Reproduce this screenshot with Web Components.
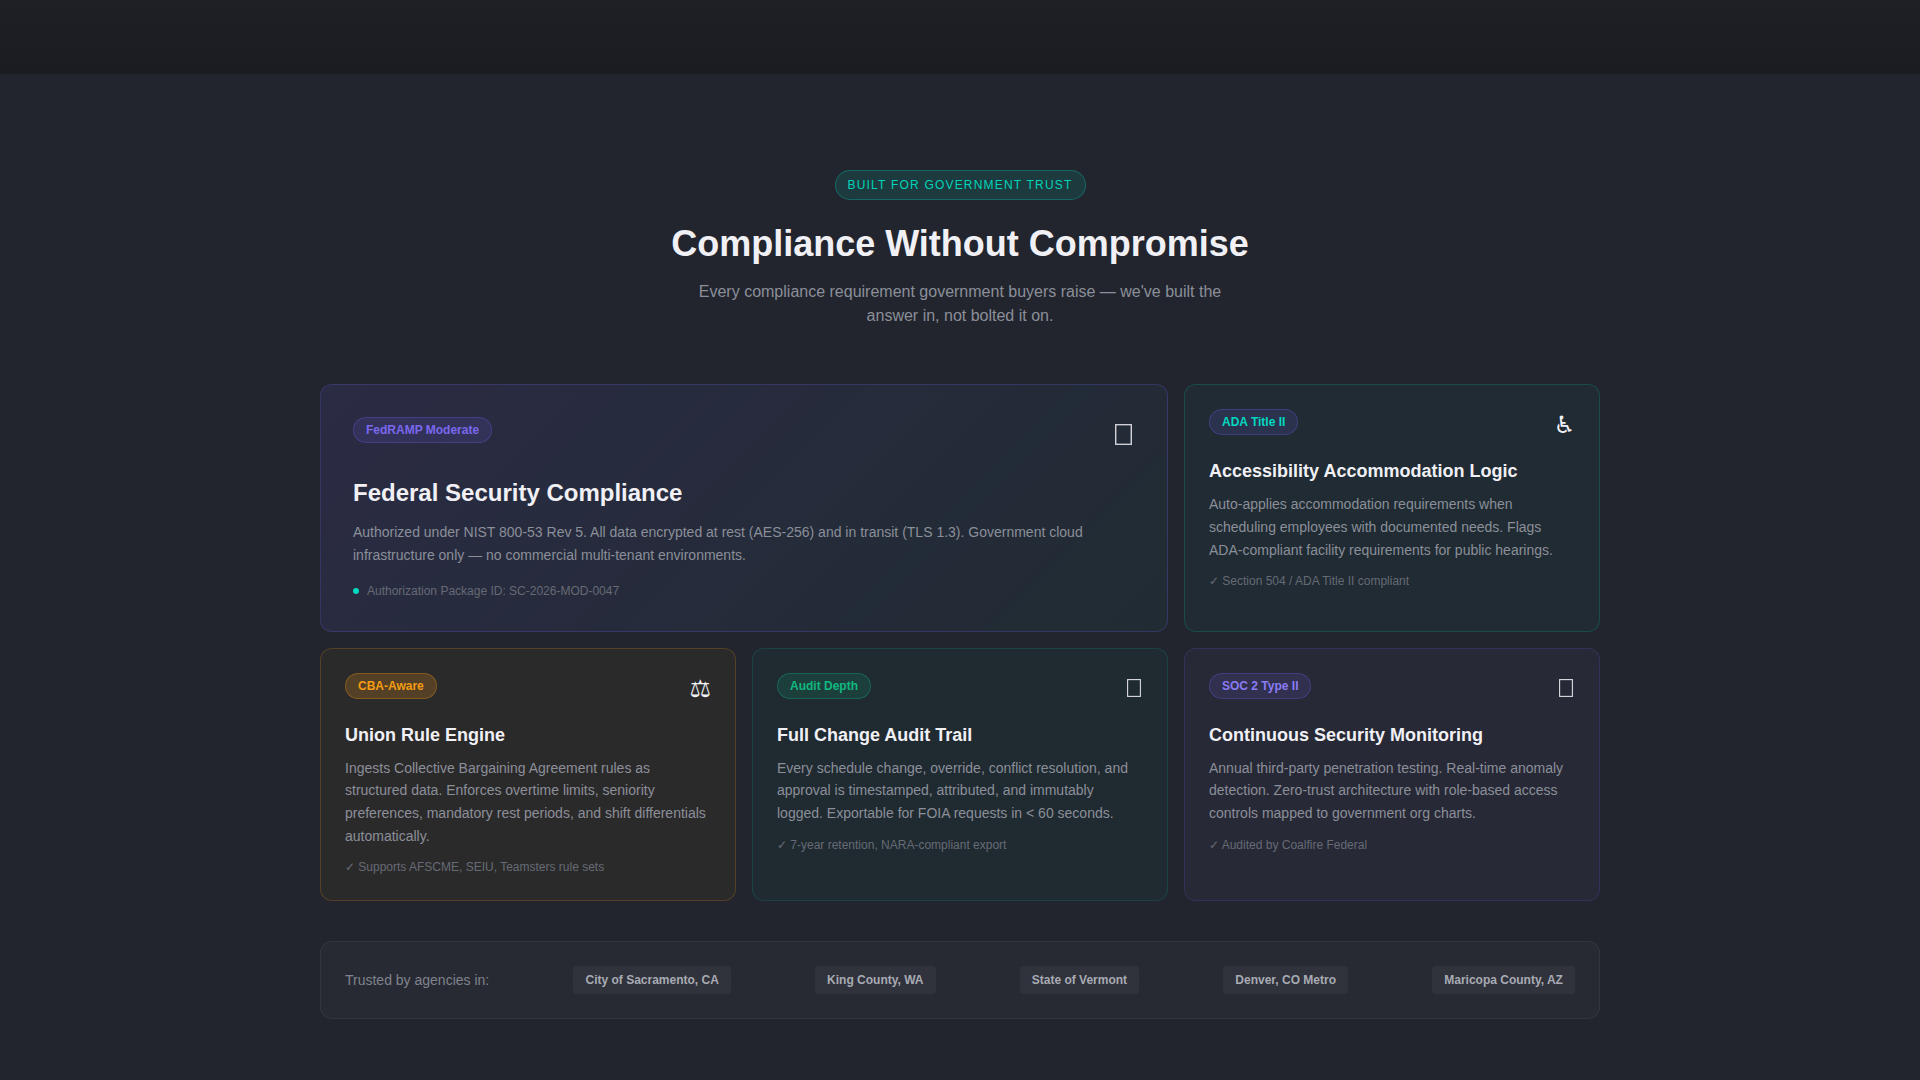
<!DOCTYPE html>
<html lang="en">
<head>
<meta charset="utf-8">
<title>Compliance Without Compromise</title>
<style>
  html, body { margin: 0; padding: 0; background: #22252e; }
  body { font-family: "Liberation Sans", Arial, sans-serif; line-height: 1.5; color: #f0f0f5; }
</style>
</head>
<body>

<template id="tpl-card">
  <style>
    :host { display: block; box-sizing: border-box; border: 1px solid var(--line); border-radius: 12px; background: var(--fill); padding: 24px 24px 23.7px; }
    :host([wide]) { grid-column: span 2; padding: 32px 32px 31px; }
    .top { display: flex; justify-content: space-between; align-items: flex-start; height: 34px; margin-bottom: 15px; }
    :host([wide]) .top { height: 42px; margin-bottom: 16px; }
    .icon { font-family: "DejaVu Sans", sans-serif; font-size: 24px; line-height: 33px; color: #f0f0f5; }
    h3 { margin: 0 0 8px; font-size: 18px; font-weight: 700; color: #f0f0f5; }
    :host([wide]) h3 { font-size: 24px; margin-bottom: 10px; }
    p { margin: 0 0 10.8px; font-size: 14px; line-height: 22.75px; color: #8b8f99; }
    :host([wide]) p { margin-bottom: 15px; }
    .note { font-size: 12px; color: #666a75; }
  </style>
  <div class="top"><slot name="badge"></slot><span class="icon"><slot name="icon"></slot></span></div>
  <h3><slot name="title"></slot></h3>
  <p><slot></slot></p>
  <div class="note"><slot name="note"></slot></div>
</template>

<template id="tpl-badge">
  <style>
    :host { display: inline-block; font-size: 12px; font-weight: 700; padding: 3px 12px; border-radius: 100px; border: 1px solid var(--b-line); background: var(--b-fill); color: var(--b-text); }
  </style>
  <slot></slot>
</template>

<template id="tpl-tofu">
  <style>
    :host { display: block; margin: 6px 2px 0 0; width: 14px; height: 18px; }
    :host([big]) { margin: 7px 3px 0 0; width: 17px; height: 21px; }
    svg { display: block; width: 100%; height: 100%; }
  </style>
  <svg viewBox="0 0 14 18" preserveAspectRatio="none" fill="none" stroke="#dcdce2" stroke-width="1.1"><rect x=".6" y=".6" width="12.8" height="16.8"/></svg>
</template>

<template id="tpl-eyebrow">
  <style>
    :host { display: block; width: fit-content; margin: 0 auto; font-size: 12px; letter-spacing: 1.2px; text-transform: uppercase; padding: 5px 12px; border-radius: 100px; border: 1px solid rgba(0,212,190,.3); background: rgba(0,212,190,.12); color: #00d4b8; }
  </style>
  <slot></slot>
</template>

<template id="tpl-head">
  <style>
    :host { display: block; text-align: center; margin-bottom: 56px; }
    h2 { margin: 22px 0 15px; font-size: 36px; line-height: 1.2; font-weight: 700; color: #f0f0f5; }
    p { margin: 0 auto; max-width: 560px; font-size: 16px; color: #8b8f99; }
  </style>
  <slot name="eyebrow"></slot>
  <h2><slot name="title"></slot></h2>
  <p><slot></slot></p>
</template>

<template id="tpl-trust">
  <style>
    :host { display: flex; justify-content: space-between; align-items: center; box-sizing: border-box; margin-top: 40px; padding: 24px; border: 1px solid rgba(255,255,255,.06); border-radius: 12px; background: #282a33; }
    span { font-size: 14px; color: #7f838d; padding-top: 1px; }
  </style>
  <span><slot name="label"></slot></span>
  <slot></slot>
</template>

<template id="tpl-chip">
  <style>
    :host { display: block; font-size: 12px; font-weight: 700; padding: 5px 12px; border-radius: 4px; background: #30323c; color: #a8abb3; }
  </style>
  <slot></slot>
</template>

<template id="tpl-dot">
  <style>
    :host { display: flex; align-items: center; gap: 8px; }
    i { width: 6px; height: 6px; border-radius: 50%; background: #00d9c0; }
  </style>
  <i></i><slot></slot>
</template>

<template id="tpl-topbar">
  <style>
    :host { display: block; height: 74px; background: linear-gradient(#1e2025, #1a1c21); }
  </style>
</template>

<template id="tpl-section">
  <style>
    :host { display: block; padding: 96px 0 62px; }
    .wrap { width: 1280px; margin: 0 auto; }
  </style>
  <div class="wrap"><slot></slot></div>
</template>

<template id="tpl-grid">
  <style>
    :host { display: grid; grid-template-columns: repeat(3, 1fr); gap: 16px; }
  </style>
  <slot></slot>
</template>

<comp-topbar></comp-topbar>

<comp-section>
  <comp-head>
    <comp-eyebrow slot="eyebrow">Built for Government Trust</comp-eyebrow>
    <span slot="title">Compliance Without Compromise</span>
    Every compliance requirement government buyers raise — we've built the answer in, not bolted it on.
  </comp-head>

  <comp-grid>
    <comp-card wide style="--line:rgba(108,92,231,.25);--fill:linear-gradient(135deg,rgba(108,92,231,.12),rgba(0,212,170,.04))">
      <comp-badge slot="badge" style="--b-line:rgba(108,92,231,.3);--b-fill:rgba(108,92,231,.15);--b-text:#7b68ee">FedRAMP Moderate</comp-badge>
      <comp-tofu slot="icon" big></comp-tofu>
      <span slot="title">Federal Security Compliance</span>
      Authorized under NIST 800-53 Rev 5. All data encrypted at rest (AES-256) and in transit (TLS 1.3). Government cloud infrastructure only — no commercial multi-tenant environments.
      <comp-dot slot="note">Authorization Package ID: SC-2026-MOD-0047</comp-dot>
    </comp-card>

    <comp-card style="--line:rgba(0,212,170,.2);--fill:rgba(0,212,170,.04)">
      <comp-badge slot="badge" style="--b-line:rgba(108,92,231,.3);--b-fill:rgba(108,92,231,.15);--b-text:#00d9c0">ADA Title II</comp-badge>
      <span slot="icon">&#x267F;&#xFE0E;</span>
      <span slot="title">Accessibility Accommodation Logic</span>
      Auto-applies accommodation requirements when scheduling employees with documented needs. Flags ADA-compliant facility requirements for public hearings.
      <span slot="note">✓ Section 504 / ADA Title II compliant</span>
    </comp-card>

    <comp-card style="--line:rgba(243,156,18,.2);--fill:#2b2a2b">
      <comp-badge slot="badge" style="--b-line:rgba(243,156,18,.3);--b-fill:rgba(243,156,18,.2);--b-text:#f39c12">CBA-Aware</comp-badge>
      <span slot="icon">&#x2696;&#xFE0E;</span>
      <span slot="title">Union Rule Engine</span>
      Ingests Collective Bargaining Agreement rules as structured data. Enforces overtime limits, seniority preferences, mandatory rest periods, and shift differentials automatically.
      <span slot="note">✓ Supports AFSCME, SEIU, Teamsters rule sets</span>
    </comp-card>

    <comp-card style="--line:rgba(0,212,170,.15);--fill:rgba(0,212,170,.03)">
      <comp-badge slot="badge" style="--b-line:rgba(16,185,129,.3);--b-fill:rgba(16,185,129,.15);--b-text:#10b981">Audit Depth</comp-badge>
      <comp-tofu slot="icon"></comp-tofu>
      <span slot="title">Full Change Audit Trail</span>
      Every schedule change, override, conflict resolution, and approval is timestamped, attributed, and immutably logged. Exportable for FOIA requests in &lt; 60 seconds.
      <span slot="note">✓ 7-year retention, NARA-compliant export</span>
    </comp-card>

    <comp-card style="--line:rgba(108,92,231,.2);--fill:#272936">
      <comp-badge slot="badge" style="--b-line:rgba(108,92,231,.3);--b-fill:rgba(108,92,231,.15);--b-text:#8b7cf6">SOC 2 Type II</comp-badge>
      <comp-tofu slot="icon"></comp-tofu>
      <span slot="title">Continuous Security Monitoring</span>
      Annual third-party penetration testing. Real-time anomaly detection. Zero-trust architecture with role-based access controls mapped to government org charts.
      <span slot="note">✓ Audited by Coalfire Federal</span>
    </comp-card>
  </comp-grid>

  <comp-trust>
    <span slot="label">Trusted by agencies in:</span>
    <comp-chip>City of Sacramento, CA</comp-chip>
    <comp-chip>King County, WA</comp-chip>
    <comp-chip>State of Vermont</comp-chip>
    <comp-chip>Denver, CO Metro</comp-chip>
    <comp-chip>Maricopa County, AZ</comp-chip>
  </comp-trust>
</comp-section>

<script>
  class ShadowPart extends HTMLElement
  {
    constructor(id)
    {
      super();
      this.attachShadow({ mode: "open" }).appendChild(document.getElementById(id).content.cloneNode(true));
    }
  }

  const parts = ["card", "badge", "tofu", "eyebrow", "head", "trust", "chip", "dot", "topbar", "section", "grid"];
  parts.forEach(name =>
  {
    customElements.define("comp-" + name, class extends ShadowPart
    {
      constructor() { super("tpl-" + name); }
    });
  });
</script>
</body>
</html>
